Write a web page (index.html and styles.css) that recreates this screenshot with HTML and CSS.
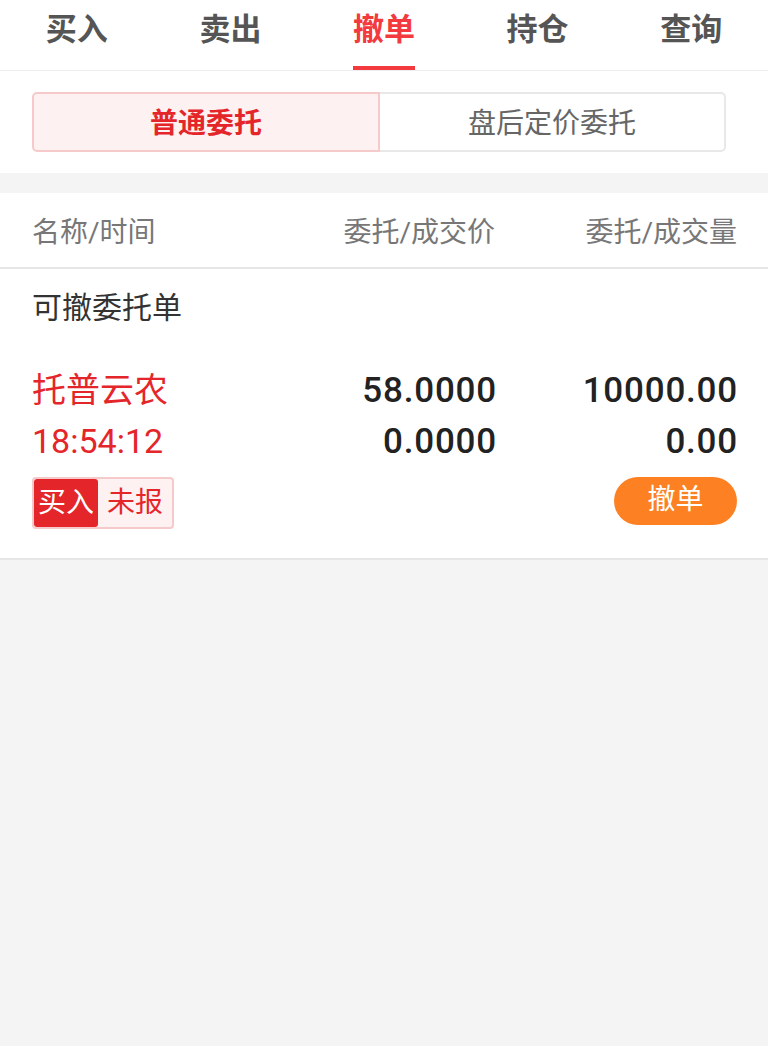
FILE: index.html
```html
<!DOCTYPE html>
<html><head><meta charset="utf-8"/><meta name="viewport" content="width=device-width, initial-scale=1"/>
<link rel="stylesheet" href="styles.css">
<title>撤单</title></head>
<body>
<div class="tabs">
 <div class="tab">买入</div>
 <div class="tab">卖出</div>
 <div class="tab on"><span>撤单</span></div>
 <div class="tab">持仓</div>
 <div class="tab">查询</div>
</div>
<div class="seg">
 <div class="segbtn on">普通委托</div>
 <div class="segbtn">盘后定价委托</div>
</div>
<div class="gap"></div>
<div class="head">
 <div class="c1">名称/时间</div>
 <div class="c2">委托/成交价</div>
 <div class="c3">委托/成交量</div>
</div>
<div class="title">可撤委托单</div>
<div class="order">
 <div class="line">
  <div class="c1 red name">托普云农</div>
  <div class="c2 num">58.0000</div>
  <div class="c3 num">10000.00</div>
 </div>
 <div class="line">
  <div class="c1 red time">18:54:12</div>
  <div class="c2 num">0.0000</div>
  <div class="c3 num">0.00</div>
 </div>
 <div class="line last">
  <div class="tag"><span class="dir">买入</span><span class="st">未报</span></div>
  <div class="cancel">撤单</div>
 </div>
</div>
</body></html>
```
FILE: styles.css
```css
*{ padding:0; margin:0; box-sizing:border-box; }
body{ background:#f4f4f4; font-family:Roboto,"Noto Sans CJK SC",sans-serif; color:#333; }
.tabs{ display:flex; height:71px; background:#fff; border-bottom:1px solid #eee; }
.tab{ flex:1; text-align:center; font-size:31px; font-weight:bold; color:#555; line-height:60px; }
.tab.on span{ display:inline-block; height:70px; color:#f23a3f; border-bottom:4px solid #f23a3f; }
.seg{ display:flex; background:#fff; padding:21px 42px 21px 32px; }
.segbtn{ flex:1; height:60px; line-height:60px; text-align:center; font-size:28px; color:#666; border:2px solid #e8e8e8; border-left:none; border-radius:0 5px 5px 0; }
.segbtn.on{ color:#e4262b; font-weight:bold; background:#fdf1f1; border:2px solid #f6caca; border-radius:5px 0 0 5px; }
.gap{ height:20px; }
.head{ display:flex; align-items:center; height:76px; background:#fff; border-bottom:2px solid #e6e6e6; padding:0 31px 0 32px; font-size:28px; color:#777; }
.c1{ flex:1; }
.c2{ width:200px; text-align:right; }
.c3{ width:242px; text-align:right; }
.title{ background:#fff; font-size:30px; color:#333; padding:18px 32px 0; height:78px; line-height:42px; }
.order{ background:#fff; padding:18px 31px 29px 32px; border-bottom:2px solid #e6e6e6; }
.line{ display:flex; align-items:baseline; height:51px; line-height:51px; }
.red{ color:#e4262b; }
.name{ font-size:34px; }
.time{ font-size:34px; }
.num{ font-size:35px; font-weight:500; color:#222; letter-spacing:0.8px; margin-right:-1px; }
.line.last{ justify-content:space-between; align-items:flex-start; height:52px; margin-top:10px; line-height:normal; }
.tag{ display:flex; height:52px; border:2px solid #f6caca; border-radius:4px; background:#fdf1f1; font-size:28px; overflow:hidden; }
.dir{ background:#e4262b; color:#fff; padding:0 4px; line-height:48px; border-radius:3px; }
.st{ color:#e4262b; padding:0 9px 0 9px; line-height:48px; }
.cancel{ width:123px; height:48px; line-height:46px; text-align:center; border-radius:24px; background:#fd8123; color:#fff; font-size:28px; }
```
